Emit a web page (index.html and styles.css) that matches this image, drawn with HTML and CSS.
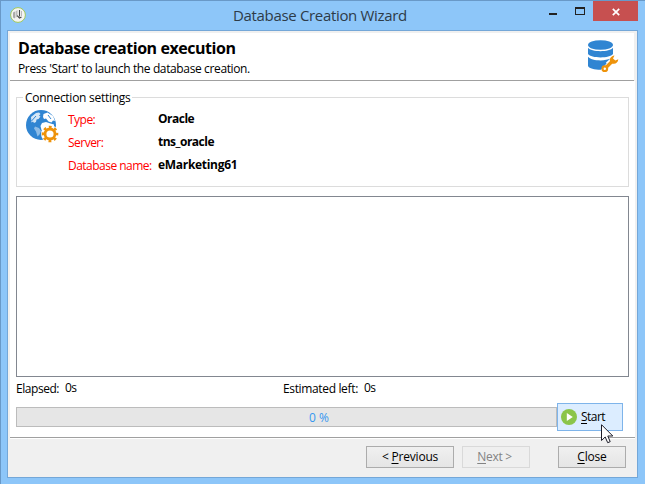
FILE: index.html
```html
<!DOCTYPE html>
<html lang="en">
<head>
<meta charset="utf-8">
<title>Database Creation Wizard</title>
<link rel="stylesheet" href="styles.css">
</head>
<body>
<div class="window">
  <div class="titlebar">
    <svg class="app-icon" width="16" height="16" viewBox="0 0 16 16">
      <circle cx="8" cy="8" r="7.4" fill="#f4f4f2" stroke="#9fc85a" stroke-width="1"/>
      <path d="M3 5.500l2-1v7l-2-1z" fill="#aaa"/><path d="M5.500 4.500l2-1.500v6L5.500 11z" fill="#bbb"/>
      <path d="M9.500 3v6.500M7.200 8.600l2.300 2.500 2-1" fill="none" stroke="#444" stroke-width="1.100"/>
      <path d="M11.500 4v5" stroke="#bbb"/>
    </svg>
    <span class="title">Database Creation Wizard</span>
    <div class="controls">
      <span class="min"></span>
      <span class="max"></span>
      <span class="close"><svg width="8" height="8" viewBox="0 0 8 8"><path d="M.8 .8l6.4 6.4M7.2 .8L.8 7.2" stroke="#fff" stroke-width="1.7"/></svg></span>
    </div>
  </div>
  <div class="client">
    <header class="header">
      <div>
        <h1>Database creation execution</h1>
        <p>Press 'Start' to launch the database creation.</p>
      </div>
      <svg width="32" height="34" viewBox="0 0 32 34">
        <g fill="#3085d2">
          <ellipse cx="12.500" cy="5" rx="12.500" ry="4.800"/>
          <path d="M0 7.800C3 12.300 22 12.300 25 7.800V14C22 18.500 3 18.500 0 14z"/>
          <path d="M0 16.800C3 21 17 21.500 22.500 18.600L18 22.500 18.500 23.500 13 29.700C6 29.700 1.500 28.500 0 26z"/>
        </g>
        <path d="M17.500 28L25 20.500" stroke="#ee930b" stroke-width="3.400"/>
        <circle cx="16.800" cy="28.700" r="2.300" fill="#fff" stroke="#ee930b" stroke-width="2.200"/>
        <path d="M26.500 15.500C22.500 16 20.800 19.500 22.500 22.200 25.500 25.300 30 23.500 30.300 19.200L27.300 20.500 25 18.500z" fill="#ee930b"/>
      </svg>
    </header>
    <main class="body">
      <section class="settings">
        <h2>Connection settings</h2>
        <svg width="33" height="33" viewBox="0 0 33 33">
          <circle cx="15" cy="15" r="15" fill="#3085d2"/>
          <g fill="#fff">
            <path d="M5 7L10 3l3-.5 1.500 1.500-1.500 1.700 1.500 .8-2 2.500-2 .5-.5 2.500-2 1-1-1.500-1.500 1z" opacity=".8"/>
            <path d="M17.500 4l4-1.500L27 6l2 5-2-.5-1.500 2-3-1-2.500-3-2 .500-1-2z"/>
            <path d="M16 13l4-1 4.500 1.500 3.500 1v6L20 29l-1-4-1-3-2.500-2-1-4z"/>
            <path d="M9 16.500l4 1.500 2 3-1.500 3.500-2 2-1.500-5-2-3z" opacity=".45"/>
          </g>
          <path d="M5.500 11l4.500-5M22 5l3 4" stroke="#3085d2"/>
          <circle cx="24" cy="24" r="9" fill="#fff"/>
          <g fill="none" stroke="#ee930b">
            <circle cx="24" cy="24" r="7" stroke-width="2.600" stroke-dasharray="2.750 2.750" stroke-dashoffset="1.380"/>
            <circle cx="24" cy="24" r="5" stroke-width="2.800"/>
          </g>
        </svg>
        <dl>
          <dt>Type:</dt><dd>Oracle</dd>
          <dt>Server:</dt><dd>tns_oracle</dd>
          <dt>Database name:</dt><dd class="wide">eMarketing61</dd>
        </dl>
      </section>
      <div class="log"></div>
      <div class="times">
        <div><span class="elapsed">Elapsed:</span><span class="sec">0s</span></div>
        <div><span class="left">Estimated left:</span><span class="sec">0s</span></div>
      </div>
      <div class="run">
        <div class="progress">0 %</div>
        <button class="start">
          <svg width="16" height="16" viewBox="0 0 16 16"><circle cx="8" cy="8" r="8" fill="#8bc54a"/><path d="M5.800 4l6 4-6 4z" fill="#fff"/></svg>
          <span><u>S</u>tart</span>
        </button>
      </div>
    </main>
    <footer class="footer">
      <button class="prev"><span>&lt; <u>P</u>revious</span></button>
      <button class="next" disabled><span><u>N</u>ext &gt;</span></button>
      <button class="done"><span><u>C</u>lose</span></button>
    </footer>
  </div>
  <svg class="cursor" width="13" height="20" viewBox="0 0 13 20"><path d="M.5 .7V16.500L4.200 13l2.500 5.700 2.500-1L6.800 12h5z" fill="#fff" stroke="#1c1c28"/></svg>
</div>
</body>
</html>
```
FILE: styles.css
```css
* { box-sizing: border-box; }
body {
  margin: 0;
  background: #fff;
  color: #000;
  font: 12px/16px "Open Sans", "Noto Sans", sans-serif;
  overflow: hidden;
}
.window {
  position: relative;
  width: 645px;
  height: 484px;
  padding: 0 7px 6px 6px;
  background: #8dc6f9;
  border-top: 1px solid #6999c8;
  border-left: 1px solid #6999c8;
}
.titlebar {
  display: flex;
  height: 29px;
  padding-left: 3px;
}
.app-icon { margin-top: 6px; }
.title {
  flex: 1;
  padding: 4px 0 0 207px;
  color: #2d3b48;
  font-size: 15px;
  line-height: 20px;
  white-space: nowrap;
  letter-spacing: -.33px;
}
.controls { display: flex; height: 20px; }
.min { width: 8px; height: 2px; margin: 12px 18px 0 0; background: #222; }
.max { width: 10px; height: 8px; margin: 6px 8px 0 0; border: 1px solid #222; border-top-width: 2px; }
.close { display: flex; align-items: center; justify-content: center; width: 45px; padding-top: 1px; background: #c75050; }
.client {
  display: flex;
  flex-direction: column;
  height: 448px;
  padding: 2px;
  background: #f0f0f0;
  border: 1px solid #74a7d8;
}
.header {
  display: flex;
  flex-shrink: 0;
  justify-content: space-between;
  height: 48px;
  padding: 5px 14px 0 8px;
  margin-right: 1px;
  background: #fff;
  border-bottom: 1px solid #a0a0a0;
}
.header svg { margin-top: 2px; }
.header h1 { margin: 0; font-size: 16px; line-height: 20px; letter-spacing: -.45px; white-space: nowrap; }
.header p { margin: 3px 0 0; white-space: nowrap; letter-spacing: -.37px; }
.body {
  flex-shrink: 0;
  height: 358px;
  padding: 16px 6px 0;
  background: #fff;
  border-bottom: 1px solid #fff;
  box-shadow: inset 0 -1px #a0a0a0;
}
.settings {
  position: relative;
  display: flex;
  height: 90px;
  padding-left: 9px;
  border: 1px solid #dcdcdc;
}
.settings h2 {
  position: absolute;
  top: -8px;
  left: 6px;
  margin: 0;
  padding: 0 1px 0 2px;
  background: #fff;
  font-size: 12px;
  font-weight: 400;
  letter-spacing: -.27px;
}
.settings svg { margin-top: 12px; }
.settings dl {
  display: grid;
  grid-template-columns: 90px 1fr;
  grid-auto-rows: 23px;
  margin: 13px 0 0 9px;
  white-space: nowrap;
}
.settings dt { padding-top: 1px; color: #f00; letter-spacing: -.52px; }
.settings dd { margin: 0; font-weight: 700; letter-spacing: -.5px; }
.settings .wide { letter-spacing: -.3px; }
.log { height: 181px; margin-top: 9px; border: 1px solid #828790; }
.times { display: grid; grid-template-columns: 267px 1fr; padding-top: 4px; }
.times > div { display: flex; gap: 6px; }
.times .elapsed { letter-spacing: -.45px; }
.times .left { letter-spacing: -.35px; }
.times .sec { margin-top: -1px; letter-spacing: -.6px; }
.run { display: flex; align-items: center; margin-top: 6px; }
.progress {
  width: 541px;
  height: 20px;
  padding-left: 65px;
  background: #e6e6e6;
  border: 1px solid #bcbcbc;
  color: #3597f0;
  line-height: 20px;
  text-align: center;
}
button {
  display: flex;
  align-items: center;
  justify-content: center;
  padding: 0;
  color: #000;
  font: inherit;
  letter-spacing: -.2px;
  border: 1px solid #acacac;
  background: linear-gradient(#f0f0f0, #e5e5e5);
}
u { text-underline-offset: 2px; text-decoration-thickness: 1px; }
.start {
  justify-content: flex-start;
  gap: 4px;
  width: 66px;
  height: 28px;
  padding-left: 3px;
  letter-spacing: -.55px;
  background: #dcedff;
  border-color: #7eb4ea;
}
.footer { display: flex; justify-content: flex-end; height: 36px; padding: 7px 9px 0 0; }
.footer button { width: 68px; height: 22px; }
.footer .prev { width: 88px; margin-right: 8px; }
.footer .next { margin-right: 28px; padding-right: 3px; color: #838383; letter-spacing: -.3px; border-color: #d9d9d9; background: #efefef; }
.cursor { position: absolute; left: 600px; top: 423px; }
```
